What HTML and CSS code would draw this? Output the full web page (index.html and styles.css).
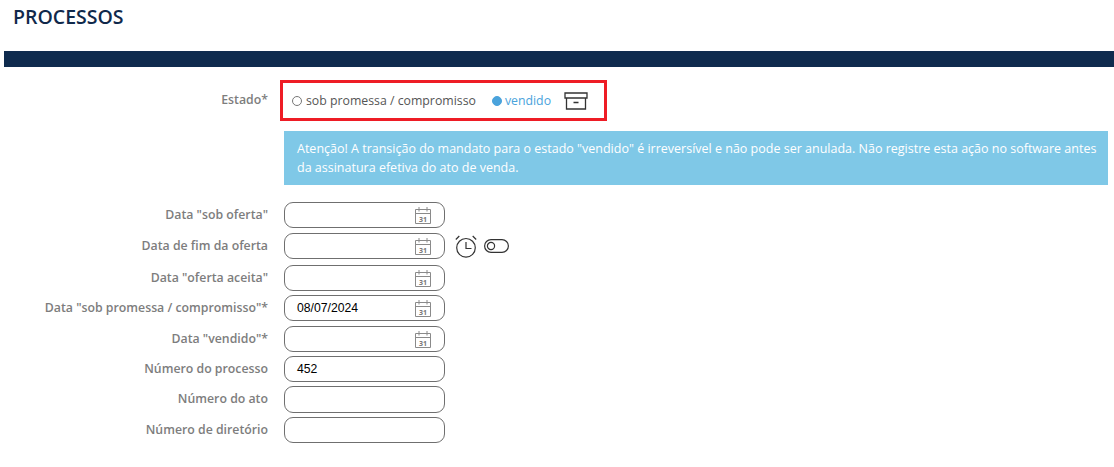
FILE: index.html
```html
<!DOCTYPE html>
<html lang="pt">
<head>
<meta charset="utf-8">
<title>Processos</title>
<link rel="stylesheet" href="styles.css">
</head>
<body>
<h1 class="title">PROCESSOS</h1>
<div class="bar"></div>
<div class="state-row">
  <div class="label">Estado*</div>
  <div class="state-box">
    <span class="radio"><i class="dot"></i>sob promessa / compromisso</span>
    <span class="radio active"><i class="dot"></i>vendido</span>
    <svg class="archive" width="24" height="18" viewBox="0 0 24 18"><path d="M1 1h22v5H1zM2.500 6v11h19V6M9.500 10.500h5" fill="none" stroke="#333" stroke-width="1.300"/></svg>
  </div>
</div>
<div class="notice">Atenção! A transição do mandato para o estado "vendido" é irreversível e não pode ser anulada. Não registre esta ação no software antes da assinatura efetiva do ato de venda.</div>
<div class="form">
  <div class="label">Data "sob oferta"</div>
  <div class="field"><svg class="cal" viewBox="0 0 16 17"><path d="M.5 2.500h15v14H.5zM.5 6.500h15M4 0v4.500M12 0v4.500" fill="none" stroke="#8a8a8a"/><text x="8" y="14.500" text-anchor="middle" class="cal-num">31</text></svg></div>
  <div class="label nudge1">Data de fim da oferta</div>
  <div class="field-line nudge1">
    <div class="field"><svg class="cal" viewBox="0 0 16 17"><path d="M.5 2.500h15v14H.5zM.5 6.500h15M4 0v4.500M12 0v4.500" fill="none" stroke="#8a8a8a"/><text x="8" y="14.500" text-anchor="middle" class="cal-num">31</text></svg></div>
    <svg class="clock" width="22" height="23" viewBox="0 0 22 23"><circle cx="11" cy="12.800" r="9.300" fill="none" stroke="#333" stroke-width="1.200"/><path d="M11 7v6.500h5.500M.8 4.500 4.300 1M21.200 4.500 17.700 1" fill="none" stroke="#333" stroke-width="1.200"/></svg>
    <svg class="toggle" width="25" height="14" viewBox="0 0 25 14"><rect x=".6" y=".6" width="23.800" height="12.800" rx="6.400" fill="none" stroke="#333" stroke-width="1.200"/><circle cx="7" cy="7" r="3.600" fill="none" stroke="#333" stroke-width="1.200"/></svg>
  </div>
  <div class="label nudge2">Data "oferta aceita"</div>
  <div class="field nudge2"><svg class="cal" viewBox="0 0 16 17"><path d="M.5 2.500h15v14H.5zM.5 6.500h15M4 0v4.500M12 0v4.500" fill="none" stroke="#8a8a8a"/><text x="8" y="14.500" text-anchor="middle" class="cal-num">31</text></svg></div>
  <div class="label">Data "sob promessa / compromisso"*</div>
  <div class="field">08/07/2024<svg class="cal" viewBox="0 0 16 17"><path d="M.5 2.500h15v14H.5zM.5 6.500h15M4 0v4.500M12 0v4.500" fill="none" stroke="#8a8a8a"/><text x="8" y="14.500" text-anchor="middle" class="cal-num">31</text></svg></div>
  <div class="label nudge1">Data "vendido"*</div>
  <div class="field nudge1"><svg class="cal" viewBox="0 0 16 17"><path d="M.5 2.500h15v14H.5zM.5 6.500h15M4 0v4.500M12 0v4.500" fill="none" stroke="#8a8a8a"/><text x="8" y="14.500" text-anchor="middle" class="cal-num">31</text></svg></div>
  <div class="label">Número do processo</div>
  <div class="field">452</div>
  <div class="label">Número do ato</div>
  <div class="field tall"></div>
  <div class="label">Número de diretório</div>
  <div class="field"></div>
</div>
</body>
</html>
```
FILE: styles.css
```css
* { box-sizing: border-box; }
html, body { margin: 0; padding: 0; background: #fff; }
body { font-family: "Open Sans", sans-serif; font-size: 12.3px; color: #7a7a7a; height: 467px; overflow: hidden; }
.title { margin: 0; padding: 4px 0 0 13px; height: 51px; font-size: 19.5px; line-height: 26px; font-weight: 600; color: #10294b; }
.bar { margin-left: 4px; height: 16px; background: #0f2b4e; }
.label { width: 268px; padding-bottom: 2px; text-align: right; font-weight: 600; color: #7d7d7d; white-space: nowrap; }
.state-row { display: flex; align-items: center; margin-top: 13px; height: 41px; }
.state-box { display: flex; align-items: center; margin-left: 12px; width: 327px; height: 41px; border: 3px solid #ee1c25; padding-left: 9px; color: #555; }
.radio { display: flex; align-items: center; white-space: nowrap; }
.dot { width: 10px; height: 10px; border: 1px solid #777; border-radius: 50%; margin-right: 4px; }
.active { color: #4aa3dc; margin-left: 16px; }
.active .dot { background: #4aa3dc; border-color: #4aa3dc; margin-right: 3px; }
.archive { margin-left: 13px; }
.notice { margin: 10px 0 0 284px; width: 824px; height: 54px; padding: 8px 6px 8px 13px; background: #7fc8e7; color: #fff; font-size: 12.5px; line-height: 19px; }
.form { display: grid; grid-template-columns: 268px 1fr; column-gap: 16px; row-gap: 4px; margin-top: 17px; align-items: center; }
.nudge1 { margin-top: 1px; }
.nudge2 { margin-top: 2px; }
.field-line { display: flex; align-items: center; }
.field { position: relative; width: 161px; height: 26px; border: 1px solid #6f6f6f; border-radius: 9px; padding-left: 12px; font-family: "Liberation Sans", Arial, sans-serif; font-size: 12.2px; line-height: 24px; color: #000; }
.tall { height: 27px; }
.cal { position: absolute; right: 13px; top: 4px; width: 16px; height: 17px; }
.cal-num { font-family: "Open Sans", sans-serif; font-size: 7px; font-weight: 700; fill: #777; }
.clock { margin-left: 10px; }
.toggle { margin-left: 7px; }
```
